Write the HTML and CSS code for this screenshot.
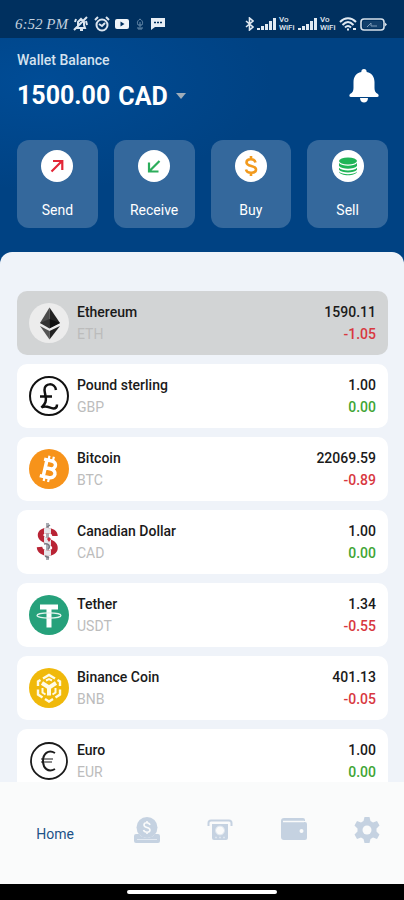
FILE: index.html
```html
<!DOCTYPE HTML>
<html lang="en">
<head>
    <meta charset="UTF-8">
    <meta name="viewport" content="width=device-width, initial-scale=1">
    <title>Wallet</title>
    <link rel="stylesheet" href="styles.css">
</head>
<body>
<div id="wrap">

    <div class="status">
        <span class="time">6:52 PM</span>
        <svg class="mute" width="16" height="16" viewBox="0 0 16 16" fill="none" stroke="#dbe5ef" stroke-width="2"><path d="M3 12h9l-1-3V6L8 3 5 6v4zM1 14L14 1M7 14h3"/><path d="M2 6l1-3M13 5l1 4"/></svg>
        <svg class="alarm" width="16" height="16" viewBox="0 0 16 16" fill="none" stroke="#dbe5ef" stroke-width="2"><circle cx="8" cy="9" r="5.5"/><path d="M1 4l3-3M12 1l3 3M5 8l3 2 3-3"/></svg>
        <svg class="tube" width="14" height="10" viewBox="0 0 14 10"><rect width="14" height="10" rx="2" fill="#f1f5f9"/><path d="M5.500 2.500v5L9.500 5z" fill="#00305f"/></svg>
        <svg class="pin" width="8" height="12" viewBox="0 0 8 12" fill="none" stroke="#6b8dac"><path d="M4 1c3 2 3 4 2 6H2C1 5 1 3 4 1zM4 4v7M2 9v2h4V9"/></svg>
        <svg class="chat" width="14" height="12" viewBox="0 0 14 12"><path d="M0 0h14v9H4l-4 3z" fill="#e7eef5"/><path d="M3 4.500h2M6 4.500h2M9 4.500h2" stroke="#00305f" stroke-width="1.500"/></svg>

        <svg class="bluetooth" width="9" height="14" viewBox="0 0 9 14" fill="none" stroke="#e1eaf2" stroke-width="1.600"><path d="M1 4l7 6-3.500 3V1L8 4l-7 6"/></svg>
        <svg width="19" height="12" viewBox="0 0 19 12" fill="#e1eaf2"><path d="M0 10h3v2H0zM4 8h3v4H4zM8 6h3v6H8zM12 3h3v9h-3zM16 0h3v12h-3z"/></svg>
        <span class="vo">Vo<br>WiFi</span>
        <svg width="19" height="12" viewBox="0 0 19 12" fill="#e1eaf2"><path d="M0 10h3v2H0zM4 8h3v4H4zM8 6h3v6H8zM12 3h3v9h-3zM16 0h3v12h-3z"/></svg>
        <span class="vo">Vo<br>WiFi</span>
        <svg class="wifi" width="18" height="14" viewBox="0 0 18 14" fill="none" stroke="#e1eaf2" stroke-width="2"><path d="M1 5c5-5 11-5 16 0M3.500 8c4-4 7-4 11 0M6 10.500c2-2 4-2 6 0M8 12.500h2M14 12h3"/></svg>
        <svg width="27" height="13" viewBox="0 0 27 13"><rect x="1" y="1" width="23" height="11" rx="3" fill="none" stroke="#d5e0ea" stroke-width="1.600"/><path d="M25 4.500l2 2-2 2z" fill="#d5e0ea"/><rect x="3" y="3" width="19" height="7" rx="1" fill="#123f6b"/><path d="M7 9l4-4v3h6" fill="none" stroke="#7f9cb8"/></svg>
    </div>

    <div class="header">
        <div class="top">
            <div class="balance">
                <label for="currency">Wallet Balance</label>
                <div class="sum">
                    <span>1500.00</span>
                    <select id="currency"><option>CAD</option></select>
                    <svg width="10" height="6" viewBox="0 0 10 6"><path d="M0 0h10L5 6z" fill="#9fadb9"/></svg>
                </div>
            </div>
            <button class="bell" aria-label="Notifications">
                <svg width="30" height="34" viewBox="0 0 30 34" fill="#fff"><path d="M15 0c1.700 0 2.700 1 2.700 3C23 4 25.500 8 25.500 13v6c0 3 1 5 3.500 6 1 1 1 3-1 3H2c-2 0-2-2-1-3 2.500-1 3.500-3 3.500-6v-6C4.500 8 7 4 12.300 3c0-2 1-3 2.700-3z"/><path d="M11 29h8c0 6-8 6-8 0z"/></svg>
            </button>
        </div>

        <div class="actions">
            <button>
                <svg width="32" height="32" viewBox="0 0 32 32"><circle cx="16" cy="16" r="16" fill="#fff"/><path d="M10.500 21.500L21 11M12 11h9.300v9" fill="none" stroke="#e32636" stroke-width="2.200"/></svg>
                <span>Send</span>
            </button>
            <button>
                <svg width="32" height="32" viewBox="0 0 32 32"><circle cx="16" cy="16" r="16" fill="#fff"/><path d="M21.500 11L11 21.500M11 12.500v9h9.500" fill="none" stroke="#2cad5b" stroke-width="2.200"/></svg>
                <span>Receive</span>
            </button>
            <button>
                <svg width="32" height="32" viewBox="0 0 32 32"><circle cx="16" cy="16" r="16" fill="#fff"/><path d="M20.500 12.500C19.500 8 11.500 8.500 11.500 12.500c0 4.500 9.500 2.500 9.500 7 0 4-9 4.500-10 0M16 6v4M16 22v4" fill="none" stroke="#f29a1d" stroke-width="2.600"/></svg>
                <span>Buy</span>
            </button>
            <button>
                <svg width="32" height="32" viewBox="0 0 32 32"><circle cx="16" cy="16" r="16" fill="#fff"/><ellipse cx="16" cy="11" rx="9" ry="3.500" fill="#20b456"/><path d="M7 13c3 3.500 15 3.500 18 0v3c-3 3.500-15 3.500-18 0zM7 17.800c3 3.500 15 3.500 18 0v2c-3 3.500-15 3.500-18 0zM7 21.500c3 3.500 15 3.500 18 0-1 5-17 5-18 0z" fill="#20b456"/></svg>
                <span>Sell</span>
            </button>
        </div>
    </div>

    <div class="sheet">
        <ul class="list">
            <li class="on">
                <svg width="40" height="40" viewBox="0 0 40 40"><circle cx="20" cy="20" r="20" fill="#ececec"/><path d="M20.500 4.500v18L11 20z" fill="#4a4a4a"/><path d="M20.500 4.500L31 20l-10.500 5z" fill="#222"/><path d="M11 20l9.500-4v9.500z" fill="#333"/><path d="M20.500 16L31 20l-10.500 5.500z" fill="#111"/><path d="M11 23l9.500 5v8.500z" fill="#555"/><path d="M31 23l-10.500 5v8.500z" fill="#222"/></svg>
                <div class="name"><p>Ethereum</p><p class="code">ETH</p></div>
                <div class="rate"><p>1590.11</p><p class="down">-1.05</p></div>
            </li>
            <li>
                <svg width="40" height="40" viewBox="0 0 40 40" fill="none" stroke="#111"><circle cx="20" cy="20" r="19" stroke-width="2"/><path d="M27 14c-1-8-12-7-11.500 0 .3 5 2.500 8 1 12-1 3-3 4-4 5.500 5-3 8 1 12 1 2 0 3.500-1 3.500-4M11 20.500h12" stroke-width="2.500"/></svg>
                <div class="name"><p>Pound sterling</p><p class="code">GBP</p></div>
                <div class="rate"><p>1.00</p><p class="up">0.00</p></div>
            </li>
            <li>
                <svg width="40" height="40" viewBox="0 0 40 40"><circle cx="20" cy="20" r="20" fill="#f7931a"/><g transform="rotate(13 20 20)" fill="none" stroke="#fff"><path d="M13 11.500h8c6 0 6 8 0 8h-4.500M21 19.500c8 0 8 9 0 9h-8.500M16 12v16" stroke-width="3.500"/><path d="M17.500 7v4M22 7v4M17.500 29v4M22 29v4" stroke-width="2.200"/></g></svg>
                <div class="name"><p>Bitcoin</p><p class="code">BTC</p></div>
                <div class="rate"><p>22069.59</p><p class="down">-0.89</p></div>
            </li>
            <li>
                <svg width="40" height="40" viewBox="0 0 40 40" fill="none">
                    <clipPath id="band"><path d="M15 0h7v40h-7z"/></clipPath>
                    <path d="M18.500 1v37" stroke="#a9abb2" stroke-width="3"/>
                    <path d="M26 14c0-7-14.500-7-14.500-1 0 7 14.500 5 14.500 13 0 7-15 7-15.500-1" stroke="#b92435" stroke-width="5.500"/>
                    <path d="M26 14c0-7-14.500-7-14.500-1 0 7 14.500 5 14.500 13 0 7-15 7-15.500-1" stroke="#e6e6ea" stroke-width="5.500" clip-path="url(#band)"/>
                    <path d="M18 17l2-2 2 2-2 3z" fill="#c9283b"/>
                    <path d="M18 5l3-2M15 22c5-1 7 3 4 5M16 34l4 2" stroke="#777a82" stroke-width="1.500"/>
                </svg>
                <div class="name"><p>Canadian Dollar</p><p class="code">CAD</p></div>
                <div class="rate"><p>1.00</p><p class="up">0.00</p></div>
            </li>
            <li>
                <svg width="40" height="40" viewBox="0 0 40 40"><circle cx="20" cy="20" r="20" fill="#26a17b"/><path d="M11 9.500h18v5h-6.500v18h-5v-18H11z" fill="#fff"/><ellipse cx="20" cy="20.500" rx="12" ry="2.600" fill="none" stroke="#e3f4ee" stroke-width="1.200"/></svg>
                <div class="name"><p>Tether</p><p class="code">USDT</p></div>
                <div class="rate"><p>1.34</p><p class="down">-0.55</p></div>
            </li>
            <li>
                <svg width="40" height="40" viewBox="0 0 40 40" fill="none" stroke="#fffbe6"><circle cx="20" cy="20" r="20" fill="#f0b90b" stroke="none"/><path d="M14 10.500l6-3.500 6 3.500M9 18v-4.500l2.500-1.500M31 18v-4.500l-2.500-1.500M9 21.500v5l4.500 3M31 21.500v5l-4.500 3M16 31l4 2.500 4-2.500" stroke-width="2.400"/><path d="M13 15l7 4.500 7-4.500M20 19v8.500" stroke-width="4"/><path d="M13.500 20v4.500l3 2M26.500 20v4.500l-3 2M17 12.500l3-1.500 3 1.500" stroke-width="2"/></svg>
                <div class="name"><p>Binance Coin</p><p class="code">BNB</p></div>
                <div class="rate"><p>401.13</p><p class="down">-0.05</p></div>
            </li>
            <li>
                <svg width="40" height="40" viewBox="0 0 40 40" fill="none" stroke="#1b1b1b"><circle cx="20" cy="20" r="18" stroke-width="1.800"/><path d="M26 12c-7-4-12 1-12 8s5 12 12 8" stroke-width="2"/><path d="M12 18h12M12 21h11" stroke-width="1.200"/></svg>
                <div class="name"><p>Euro</p><p class="code">EUR</p></div>
                <div class="rate"><p>1.00</p><p class="up">0.00</p></div>
            </li>
        </ul>
    </div>

    <nav class="tab">
        <a class="on" href="#">Home</a>
        <a href="#" aria-label="Deposit">
            <svg width="26" height="26" viewBox="0 0 26 26"><path d="M2 17h3c3 5 13 5 16 0h3a2 2 0 0 1 2 2v5a2 2 0 0 1-2 2H2a2 2 0 0 1-2-2v-5a2 2 0 0 1 2-2z" fill="#c5d2e1"/><path d="M3 22.500h20" stroke="#e3eaf2"/><circle cx="13" cy="10.500" r="10.500" fill="#c5d2e1"/><path d="M16 8c-1-3-6-3-6 0 0 3.500 6 1.500 6 5 0 3-5.500 3-6.500 0M13 4v2M13 15v2" fill="none" stroke="#fafbfb" stroke-width="1.600"/></svg>
        </a>
        <a href="#" aria-label="Withdraw">
            <svg width="26" height="26" viewBox="0 0 26 26" fill="none" stroke="#c5d2e1"><path d="M1.500 9V6q0-2.500 2.500-2.500h18q2.500 0 2.500 2.500v3" stroke-width="2"/><path d="M5 7h16v14q0 2-2 2H7q-2 0-2-2z" fill="#c5d2e1" stroke="none"/><circle cx="13" cy="13.500" r="4.500" fill="#fafbfb" stroke="#dde5ee"/><path d="M8 20.500h2M12 20.500h2M16 20.500h2" stroke="#dde5ee" stroke-width="1.500"/></svg>
        </a>
        <a href="#" aria-label="Wallet">
            <svg width="26" height="26" viewBox="0 0 26 26"><path d="M3 1h19q2 0 2 2v1H3v1h21q2 0 2 2v14q0 2-2 2H3q-3 0-3-3V4q0-3 3-3z" fill="#c5d2e1"/><path d="M2 4.500h21" stroke="#fafbfb" stroke-width="1.500"/><circle cx="20.500" cy="14" r="2" fill="#fafbfb"/></svg>
        </a>
        <a href="#" aria-label="Settings">
            <svg width="26" height="26" viewBox="0 0 26 26"><path d="M10.500 0h5l1 4 2.500 1.500 4-1.500 2.500 4.500-3 3v3l3 3-2.500 4.500-4-1.500-2.500 1.500-1 4h-5l-1-4L7 20.500 3 22 .5 17.500l3-3v-3l-3-3L3 4l4 1.500L9.500 4z" fill="#c5d2e1"/><circle cx="13" cy="13" r="4.500" fill="#fafbfb"/></svg>
        </a>
    </nav>

    <div class="gesture"><span></span></div>

</div>
</body>
</html>
```
FILE: styles.css
```css
body{font-family: Roboto, "Liberation Sans", sans-serif;}
body,p{margin:0;}
ul,li{margin:0;padding:0;list-style:none;}
button,select{padding:0;border:none;background:none;font-family:inherit;color:inherit;}
svg{display:block;flex-shrink:0;}

#wrap{
    display: flex;
    flex-direction: column;
    height: 100vh;
    overflow: hidden;
    background: #004283;
}

/* status bar */
.status{
    display: flex;
    align-items: center;
    flex-shrink: 0;
    box-sizing: border-box;
    height: 38px;
    padding: 10px 17px 0 15px;
    background: #00305f;
    gap: 3px;
}
.status .time{
    width: 55px;
    color: #c3d1df;
    font: italic 15px/16px "Liberation Serif", serif;
    white-space: nowrap;
}
.status .alarm,
.status .tube{
    margin-left: 2px;
}
.status .pin,
.status .chat{
    margin-left: 4px;
}
.status .bluetooth{
    margin-left: auto;
}
.status .vo{
    width: 16px;
    color: #e1eaf2;
    font-size: 8px;
    line-height: 8px;
    font-weight: 500;
}

/* balance and actions */
.header{
    flex-shrink: 0;
    padding: 12px 16px 24px 17px;
    background: radial-gradient(ellipse at 10% 20%, #004c96 0, #004283 45%);
    color: #fff;
}
.top{
    display: flex;
    justify-content: space-between;
    align-items: center;
}
.balance label{
    display: block;
    color: #d5e2ef;
    font-size: 14px;
    line-height: 20px;
    font-weight: 500;
}
.sum{
    display: flex;
    align-items: center;
    margin-top: 8px;
    gap: 8px;
    font-size: 25px;
    line-height: 36px;
    font-weight: 700;
}
.sum select{
    appearance: none;
    font-size: 25px;
    font-weight: 700;
}
.bell{
    padding: 8px 9px 0 0;
    cursor: pointer;
}
.actions{
    display: grid;
    grid-template-columns: repeat(4, 1fr);
    gap: 16px;
    margin-top: 26px;
}
.actions button{
    display: flex;
    flex-direction: column;
    align-items: center;
    height: 88px;
    padding-top: 10px;
    border-radius: 12px;
    background: #34689c;
    cursor: pointer;
}
.actions span{
    margin-top: 18px;
    font-size: 14px;
    line-height: 20px;
}

/* currency list */
.sheet{
    flex: 1;
    min-height: 0;
    overflow: hidden;
    padding: 39px 16px 0 17px;
    border-radius: 12px 12px 0 0;
    background: #eff3f9;
}
.list li{
    display: flex;
    align-items: center;
    height: 64px;
    margin-bottom: 9px;
    padding: 0 12px;
    border-radius: 10px;
    background: #fff;
    font-size: 14px;
    line-height: 22px;
    font-weight: 500;
    color: #1a1a1a;
}
.list li.on{
    background: #d2d4d5;
}
.list .name{
    flex: 1;
    margin-left: 8px;
}
.list .code{
    color: #bcbcbc;
    font-weight: 400;
}
.list .rate{
    text-align: right;
}
.list .down{
    color: #d8383f;
}
.list .up{
    color: #3fa535;
}

/* bottom tabs */
.tab{
    display: flex;
    align-items: center;
    flex-shrink: 0;
    box-sizing: border-box;
    height: 102px;
    padding-bottom: 6px;
    background: #fafbfb;
}
.tab a{
    display: flex;
    justify-content: center;
    flex: 2;
    text-decoration: none;
}
.tab a.on{
    flex: 3;
    padding-top: 8px;
    color: #1d5288;
    font-size: 14px;
    line-height: 20px;
}

.gesture{
    display: flex;
    justify-content: center;
    align-items: center;
    flex-shrink: 0;
    height: 16px;
    background: #000;
}
.gesture span{
    width: 37%;
    height: 4px;
    border-radius: 2px;
    background: #fff;
}
```
